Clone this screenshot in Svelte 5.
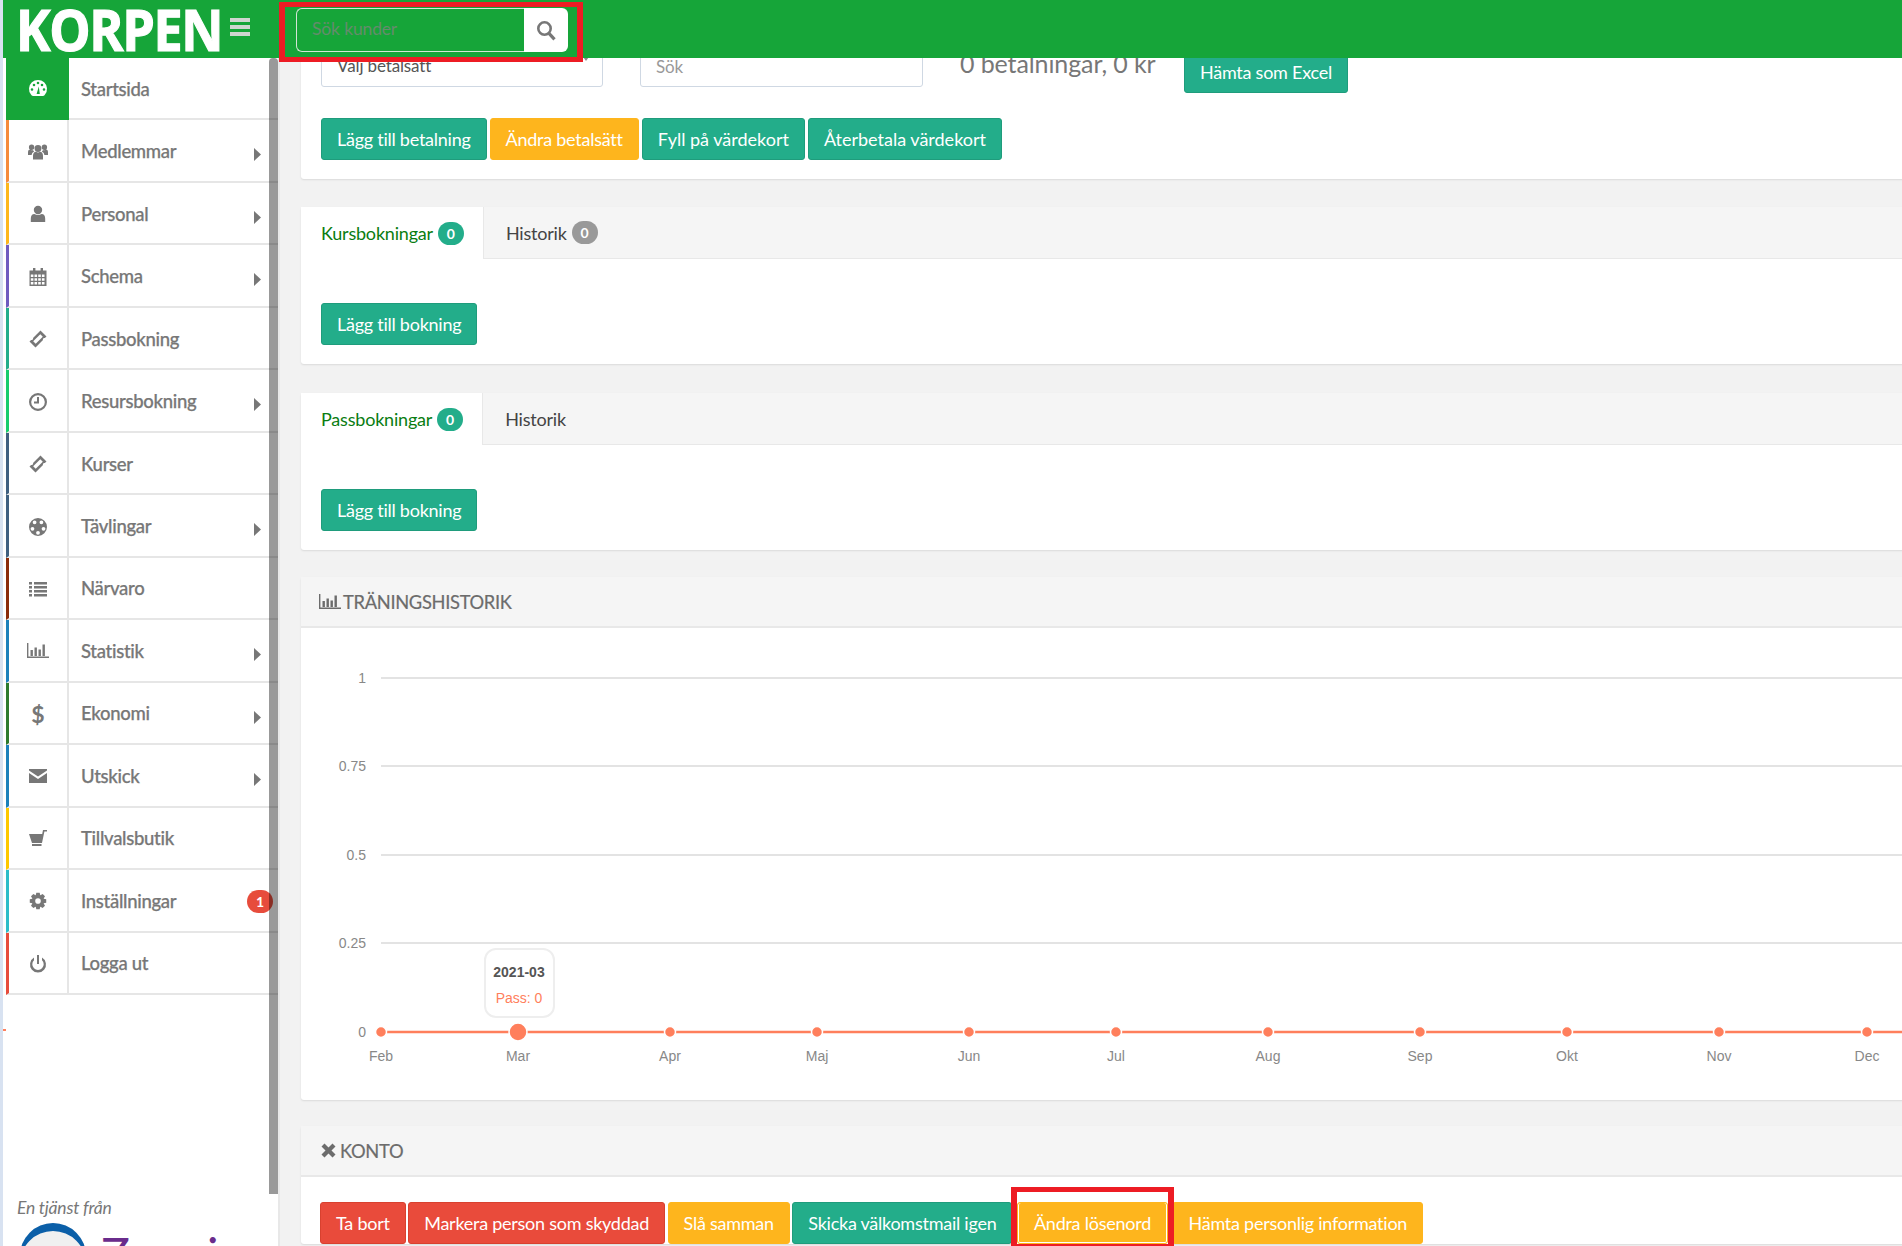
<script>
  const c = (x, y, r) => `M${x - r} ${y}a${r} ${r} 0 1 0 ${2 * r} 0a${r} ${r} 0 1 0 ${-2 * r} 0z`;
  const gear = () => {
    let d = '';
    for (let i = 0; i < 8; i++) {
      const a = (i * Math.PI) / 4;
      const p = (r, o) => `${(10 + r * Math.cos(a + o)).toFixed(2)} ${(10 + r * Math.sin(a + o)).toFixed(2)}`;
      d += `${i ? 'L' : 'M'}${p(6.2, -0.38)}L${p(8.4, -0.2)}L${p(8.4, 0.2)}L${p(6.2, 0.38)}`;
    }
    return d + 'z' + c(10, 10, 2.8);
  };
  const ball = () => {
    let d = c(10, 10, 9);
    for (let i = 0; i < 5; i++) {
      const a = -Math.PI / 2 + Math.PI / 5 + (i * 2 * Math.PI) / 5;
      d += c(+(10 + 5.8 * Math.cos(a)).toFixed(2), +(10 + 5.8 * Math.sin(a)).toFixed(2), 1.9);
    }
    return d;
  };
  const grid = () => {
    let d = 'M1.5 3.5h17v15.5h-17z';
    for (let r = 0; r < 3; r++)
      for (let k = 0; k < 4; k++) d += `M${2.8 + k * 3.7} ${7.5 + r * 3.7}h2.6v2.6h-2.6z`;
    return d + 'M5 1h2.4v2.5H5zM12.6 1H15v2.5h-2.4z';
  };
  const icons = {
    gauge: 'M3 15.6A9 9 0 1 1 17 15.6Q16.5 17 15 17H5Q3.5 17 3 15.6z' + c(4, 10.5, 1.3) + c(6, 6, 1.3) + c(10, 4, 1.3) + c(14, 6, 1.3) + c(16, 10.5, 1.3) + 'M8.6 15L10.8 7.5L11.8 15z',
    users: c(10, 6.5, 3.4) + 'M5 17.5v-3.5q0-4 3-4.2q2 1.2 4 0q3 .2 3 4.2v3.5z' + c(3.6, 5.2, 2.7) + 'M0 13v-2.5q0-3 2-3q1.5 1 3 .4q.6 1 1.2 1.6q-2.6 1-2.6 3.5z' + c(16.4, 5.2, 2.7) + 'M20 13v-2.5q0-3-2-3q-1.5 1-3 .4q-.6 1-1.2 1.6q2.6 1 2.6 3.5z',
    user: c(10, 6, 4.2) + 'M2.8 18v-3.2q0-4.8 3.6-4.8q3.6 2.2 7.2 0q3.6 0 3.6 4.8v3.2z',
    cal: grid(),
    ticket: 'M12.5 1.5L18.5 7.5L16.9 9.1Q15.8 8.7 15.2 9.4Q14.6 10.1 15 11L7.5 18.5L1.5 12.5L3.1 10.9Q4.2 11.3 4.8 10.6Q5.4 9.9 5 9zM12.3 5.2L5.2 12.3L7.7 14.8L14.8 7.7z',
    clock: c(10, 10, 9) + c(10, 10, 6.8) + 'M9 5h2v6.4H6v-2h3z',
    ball: ball(),
    list: 'M1 3h3v2.5H1zM6 3h13v2.5H6zM1 7h3v2.5H1zM6 7h13v2.5H6zM1 11h3v2.5H1zM6 11h13v2.5H6zM1 15h3v2.5H1zM6 15h13v2.5H6z',
    bars: 'M-1 2h1.4v13.6H21V17H-1zM2.5 9h2.4v6H2.5zM6.5 6.5h2.4V15H6.5zM10.5 8.5h2.4V15h-2.4zM14.5 3.5h2.4V15h-2.4z',
    mail: 'M1 3h18v1.5L10 10.5L1 4.5zM1 7l9 6 9-6v10H1z',
    cart: 'M1 5h13.2l.8-4h4v1.6h-2.6L14 14H4zM4 15h9.5v2H4z',
    gear: gear(),
    power: 'M6 3.6A8 8 0 1 0 14 3.6V6.2A5.7 5.7 0 1 1 6 6.2zM9 1h2v9H9z'
  };
  const items = [
    { label: 'Startsida', icon: 'gauge', color: '#16a539', on: true },
    { label: 'Medlemmar', icon: 'users', color: '#f58b3c', sub: true },
    { label: 'Personal', icon: 'user', color: '#fdb71c', sub: true },
    { label: 'Schema', icon: 'cal', color: '#6f5bbf', sub: true },
    { label: 'Passbokning', icon: 'ticket', color: '#22ad8a' },
    { label: 'Resursbokning', icon: 'clock', color: '#17cc6b', sub: true },
    { label: 'Kurser', icon: 'ticket', color: '#3f5f7f' },
    { label: 'Tävlingar', icon: 'ball', color: '#3f5f7f', sub: true },
    { label: 'Närvaro', icon: 'list', color: '#8a2b0a' },
    { label: 'Statistik', icon: 'bars', color: '#1b80bb', sub: true },
    { label: 'Ekonomi', dollar: true, color: '#2d7a2d', sub: true },
    { label: 'Utskick', icon: 'mail', color: '#1b80bb', sub: true },
    { label: 'Tillvalsbutik', icon: 'cart', color: '#fdc800' },
    { label: 'Inställningar', icon: 'gear', color: '#2cbcc8', badge: 1 },
    { label: 'Logga ut', icon: 'power', color: '#e74c3c' }
  ];
  const months = [['Feb', 381], ['Mar', 518], ['Apr', 670], ['Maj', 817], ['Jun', 969], ['Jul', 1116], ['Aug', 1268], ['Sep', 1420], ['Okt', 1567], ['Nov', 1719], ['Dec', 1867]];
  const ticks = [['1', 677], ['0.75', 765], ['0.5', 854], ['0.25', 942], ['0', 1031]];
  const OX = 301, OY = 627;
</script>

{#snippet caret()}
  <svg class="caret" width="7" height="13" viewBox="0 0 7 13"><path d="M0 0L7 6.5L0 13z" /></svg>
{/snippet}

<div class="page">
  <header class="top">
    <div class="logo">KORPEN</div>
    <svg class="burger" width="20" height="18" viewBox="0 0 20 18"><path d="M0 0h20v4H0zM0 7h20v4H0zM0 14h20v4H0z" /></svg>
    <div class="search-wrap">
      <div class="search">
        <div class="search-input">Sök kunder</div>
        <div class="search-btn">
          <svg width="20" height="21" viewBox="0 0 20 21" fill="none" stroke="#777" stroke-width="2.6"><circle cx="8.5" cy="8.5" r="6.2" /><path d="M13 13.4l5.5 6" stroke-width="3.2" /></svg>
        </div>
      </div>
    </div>
  </header>

  <aside class="side">
    <nav class="menu">
      {#each items as it}
        <div class="row" class:on={it.on} style="--c:{it.color}">
          <div class="cell">
            {#if it.dollar}
              <span class="dollar">$</span>
            {:else}
              <svg width="20" height="20" viewBox="0 0 20 20" class="ico"><path d={icons[it.icon]} fill-rule={it.icon === 'users' || it.icon === 'cart' ? 'nonzero' : 'evenodd'} /></svg>
            {/if}
          </div>
          <div class="name">{it.label}</div>
          {#if it.sub}{@render caret()}{/if}
          {#if it.badge}<span class="side-badge">{it.badge}</span>{/if}
        </div>
      {/each}
    </nav>
    <div class="tick"></div>
    <div class="foot">
      <div class="foot-t">En tjänst från</div>
      <div class="zoezi">
        <div class="orb"></div>
        <span>Zoezi</span>
      </div>
    </div>
    <div class="thumb"></div>
  </aside>

  <main class="main">
    <section class="card first">
      <div class="filters">
        <div class="field sel">Välj betalsätt<i class="tri"></i></div>
        <div class="field ph">Sök</div>
        <div class="sum">0 betalningar, 0 kr</div>
        <button class="btn teal">Hämta som Excel</button>
      </div>
      <div class="btns">
        <button class="btn teal">Lägg till betalning</button>
        <button class="btn amber">Ändra betalsätt</button>
        <button class="btn teal loose">Fyll på värdekort</button>
        <button class="btn teal loose">Återbetala värdekort</button>
      </div>
    </section>

    <section class="card tabs-card second">
      <div class="tabs">
        <div class="tab active">Kursbokningar <b class="pill teal-bg">0</b></div>
        <div class="tab">Historik <b class="pill grey-bg">0</b></div>
      </div>
      <div class="tab-body"><button class="btn teal">Lägg till bokning</button></div>
    </section>

    <section class="card tabs-card">
      <div class="tabs">
        <div class="tab active">Passbokningar <b class="pill teal-bg">0</b></div>
        <div class="tab">Historik</div>
      </div>
      <div class="tab-body"><button class="btn teal">Lägg till bokning</button></div>
    </section>

    <section class="card chart-card">
      <div class="head">
        <svg width="20" height="20" viewBox="0 0 20 20"><path d={icons.bars} /></svg>
        TRÄNINGSHISTORIK
      </div>
      <svg class="chart" width="1601" height="472" viewBox="0 0 1601 472">
        {#each ticks as [l, y]}
          <line x1={381 - OX} x2="1601" y1={y - OY} y2={y - OY} stroke="#e3e3e3" stroke-width="2" />
          <text x={366 - OX} y={y - OY + 5} text-anchor="end" class="tk">{l}</text>
        {/each}
        <line x1={381 - OX} x2="1601" y1={1031 - OY} y2={1031 - OY} stroke="#ff7f5c" stroke-width="2.5" />
        {#each months as [m, x], i}
          <circle cx={x - OX} cy={1031 - OY} r={i === 1 ? 9 : 5.5} fill="#ff7f5c" stroke="#fff" stroke-width="1.5" />
          <text x={x - OX} y={1060 - OY} text-anchor="middle" class="tk">{m}</text>
        {/each}
        <rect x={485 - OX} y={948 - OY} width="69" height="68" rx="11" fill="#fff" stroke="#eee" stroke-width="2" />
        <text x={519 - OX} y={976 - OY} text-anchor="middle" class="tt-a">2021-03</text>
        <text x={519 - OX} y={1002 - OY} text-anchor="middle" class="tt-b">Pass: 0</text>
      </svg>
    </section>

    <section class="card">
      <div class="head">
        <svg width="17" height="17" viewBox="0 0 17 17"><path d="M1.5 4.5L4.5 1.5L8.5 5.5L12.5 1.5L15.5 4.5L11.5 8.5L15.5 12.5L12.5 15.5L8.5 11.5L4.5 15.5L1.5 12.5L5.5 8.5z" /></svg>
        KONTO
      </div>
      <div class="btns acct">
        <button class="btn red">Ta bort</button>
        <button class="btn red">Markera person som skyddad</button>
        <button class="btn amber">Slå samman</button>
        <button class="btn teal">Skicka välkomstmail igen</button>
        <button class="btn amber boxed">Ändra lösenord</button>
        <button class="btn amber">Hämta personlig information</button>
      </div>
    </section>
  </main>
</div>

<style>
  :global(body) { margin: 0; background: #f2f2f2; }
  .page {
    display: flex;
    width: 1902px;
    height: 1246px;
    overflow: hidden;
    position: relative;
    font-family: Lato, "Liberation Sans", sans-serif;
    background: #f2f2f2;
  }
  .top {
    position: absolute;
    left: 3px;
    right: 0;
    top: 0;
    height: 58px;
    background: #16a539;
    display: flex;
    align-items: center;
    z-index: 5;
  }
  .logo {
    margin-left: 13px;
    margin-right: -23px;
    flex: none;
    font-family: "Open Sans", sans-serif;
    font-weight: 700;
    font-size: 58px;
    line-height: 58px;
    letter-spacing: -1.5px;
    color: #fff;
    -webkit-text-stroke: 1.2px #fff;
    transform: scaleX(.896);
    transform-origin: left;
  }
  .burger { margin-left: 7px; fill: #cfd6d0; margin-top: -4px; flex: none; }
  .search-wrap {
    margin-left: 29px;
    margin-top: 5px;
    width: 292px;
    height: 50px;
    border: 6px solid #ed1c24;
    border-width: 5px 6px;
    display: flex;
    align-items: center;
    justify-content: center;
    position: relative;
    z-index: 6;
  }
  .search {
    display: flex;
    width: 272px;
    height: 44px;
    margin-top: -3px;
    margin-left: 2px;
    flex: none;
  }
  .search-input {
    flex: 1;
    border: 1px solid #d3e4d6;
    border-right: 0;
    border-radius: 6px 0 0 6px;
    color: #648c6c;
    font-size: 17.5px;
    letter-spacing: -.15px;
    line-height: 40px;
    padding-left: 15px;
  }
  .search-btn {
    width: 44px;
    background: #fff;
    border-radius: 0 6px 6px 0;
    display: flex;
    align-items: center;
    justify-content: center;
  }
  .side {
    width: 280px;
    flex: none;
    box-sizing: border-box;
    height: 1246px;
    padding: 58px 0 0 3px;
    background: #fff;
    border-left: 3px solid #d8e2f1;
    position: relative;
    box-shadow: inset -2px 0 0 #e8e8e8;
  }
  .menu { width: 272px; }
  .row {
    display: flex;
    align-items: center;
    height: 62.47px;
    box-sizing: border-box;
    border-left: 3px solid var(--c);
    border-bottom: 2px solid #e6e6e6;
    position: relative;
    color: #777;
  }
  .cell {
    width: 58px;
    align-self: stretch;
    flex: none;
    border-right: 2px solid #e6e6e6;
    display: flex;
    align-items: center;
    justify-content: center;
    margin-bottom: -2px;
  }
  .row.on .cell { background: #16a539; margin-left: -3px; width: 63px; border-right: 0; }
  .row.on .ico { fill: #fff; }
  .ico { fill: #777; overflow: visible; }
  .dollar { font-size: 23px; font-weight: 700; color: #777; }
  .name {
    margin-left: 12px;
    padding-top: 1px;
    font-size: 18.5px;
    font-weight: 500;
    color: #777;
    flex: 1;
    letter-spacing: -.3px;
    -webkit-text-stroke: .25px #777;
  }
  .caret { fill: #777; position: absolute; left: 245px; top: 28px; }
  .side-badge {
    position: absolute;
    left: 238px;
    top: 20px;
    width: 26px;
    height: 23px;
    border-radius: 12px;
    background: #e74c3c;
    color: #fff;
    font-size: 14px;
    font-weight: 700;
    text-align: center;
    line-height: 23px;
  }
  .thumb {
    position: absolute;
    left: 266px;
    top: 58px;
    width: 9px;
    height: 1136px;
    background: rgba(0, 0, 0, .4);
    border-radius: 4px 4px 0 0;
    z-index: 3;
  }
  .tick { position: absolute; left: 0; top: 1029px; width: 3px; height: 2px; background: #ff7f5c; }
  .foot { margin-top: 203px; padding-left: 11px; }
  .foot-t { font-style: italic; font-size: 17.5px; color: #777; line-height: 20px; letter-spacing: -.2px; }
  .zoezi { display: flex; margin-top: 5px; height: 60px; }
  .orb {
    width: 66px;
    height: 66px;
    border-radius: 50%;
    flex: none;
    margin-left: 3px;
    background: #f0f0f0;
    box-shadow: inset 0 8px 0 #0b5fa8;
  }
  .zoezi span {
    margin-left: 15px;
    margin-top: 4px;
    font-size: 48px;
    line-height: 56px;
    color: #6a2c8c;
    letter-spacing: 1px;
  }
  .main { flex: 1; min-width: 0; padding-left: 21px; }
  .card {
    width: 1640px;
    background: #fff;
    border-radius: 3px;
    margin-bottom: 26px;
    box-shadow: 0 1px 2px rgba(0, 0, 0, .1);
  }
  .first { height: 179px; box-sizing: border-box; padding: 50px 0 0 20px; margin-bottom: 28px; }
  .filters { display: flex; align-items: flex-start; height: 43px; margin-bottom: 25px; }
  .field {
    width: 282px;
    height: 37px;
    box-sizing: border-box;
    border: 1px solid #cfd8e3;
    border-radius: 3px;
    padding: 0 15px;
    font-size: 17px;
    letter-spacing: -.15px;
    line-height: 30px;
    color: #555;
    position: relative;
  }
  .tri {
    position: absolute;
    right: 11px;
    top: 3px;
    border: 5px solid transparent;
    border-top: 7px solid #888;
    border-bottom: 0;
  }
  .ph { margin-left: 37px; color: #999; width: 283px; line-height: 32px; }
  .sum { margin-left: 37px; width: 224px; margin-top: -2px; font-size: 25px; letter-spacing: -.1px; line-height: 30px; color: #777; white-space: nowrap; }
  .filters .btn { margin-top: 1px; }
  .btns { display: flex; gap: 3px; }
  .btn {
    height: 42px;
    border: 1px solid transparent;
    border-radius: 3px;
    padding: 0 15px;
    font: 400 18px Lato, "Liberation Sans", sans-serif;
    letter-spacing: -.25px;
    color: #fff;
    white-space: nowrap;
    flex: none;
  }
  .btn.loose { letter-spacing: 0; }
  .teal { background: #23ad8a; border-color: #1f9c7c; }
  .amber { background: #feb51d; border-color: #feb51d; }
  .red { background: #e94b3b; border-color: #d8412f; }
  .tabs-card { height: 157px; margin-bottom: 27px; }
  .second { margin-bottom: 29px; }
  .tabs {
    display: flex;
    height: 52px;
    background: #f5f5f5;
    border-bottom: 1px solid #e8e8e8;
    box-sizing: border-box;
  }
  .tab {
    display: flex;
    align-items: center;
    gap: 5px;
    padding: 0 22px;
    font-size: 18px;
    letter-spacing: -.2px;
    color: #444;
  }
  .tab.active {
    background: #fff;
    color: #0a7d12;
    padding: 0 19px 0 20px;
    margin-bottom: -1px;
    border-right: 1px solid #e8e8e8;
  }
  .pill {
    display: inline-block;
    width: 26px;
    height: 23px;
    border-radius: 12px;
    text-align: center;
    font-size: 14px;
    line-height: 23px;
    color: #fff;
    font-weight: 700;
    letter-spacing: 0;
  }
  .teal-bg { background: #23ad8a; }
  .grey-bg { background: #999; }
  .tab-body { padding: 44px 0 0 20px; }
  .chart-card { height: 523px; margin-bottom: 26px; }
  .head {
    height: 51px;
    box-sizing: border-box;
    background: #f5f5f5;
    border-bottom: 2px solid #e8e8e8;
    padding-left: 19px;
    display: flex;
    align-items: center;
    gap: 3px;
    font-size: 18.3px;
    letter-spacing: -.3px;
    color: #6c6c6c;
    -webkit-text-stroke: .2px #6c6c6c;
  }
  .head svg { fill: #6c6c6c; flex: none; overflow: visible; }
  .chart { display: block; }
  .tk { font: 14px "Liberation Sans", sans-serif; fill: #888; }
  .tt-a { font: 700 14px "Liberation Sans", sans-serif; fill: #555; }
  .tt-b { font: 14px "Liberation Sans", sans-serif; fill: #ff7f5c; }
  .acct { padding: 25px 0 0 19px; gap: 2.5px; }
  .boxed {
    position: relative;
    margin: 0 2px;
    padding: 0 16px;
    box-shadow: inset 1px 0 #fff, inset -1px 0 #fff, inset 0 -1px #fff;
  }
  .boxed::after {
    content: "";
    position: absolute;
    inset: -16px -7px -4px -7px;
    border: 6px solid #ed1c24;
    border-top-width: 5px;
    border-bottom-width: 3px;
  }
</style>
